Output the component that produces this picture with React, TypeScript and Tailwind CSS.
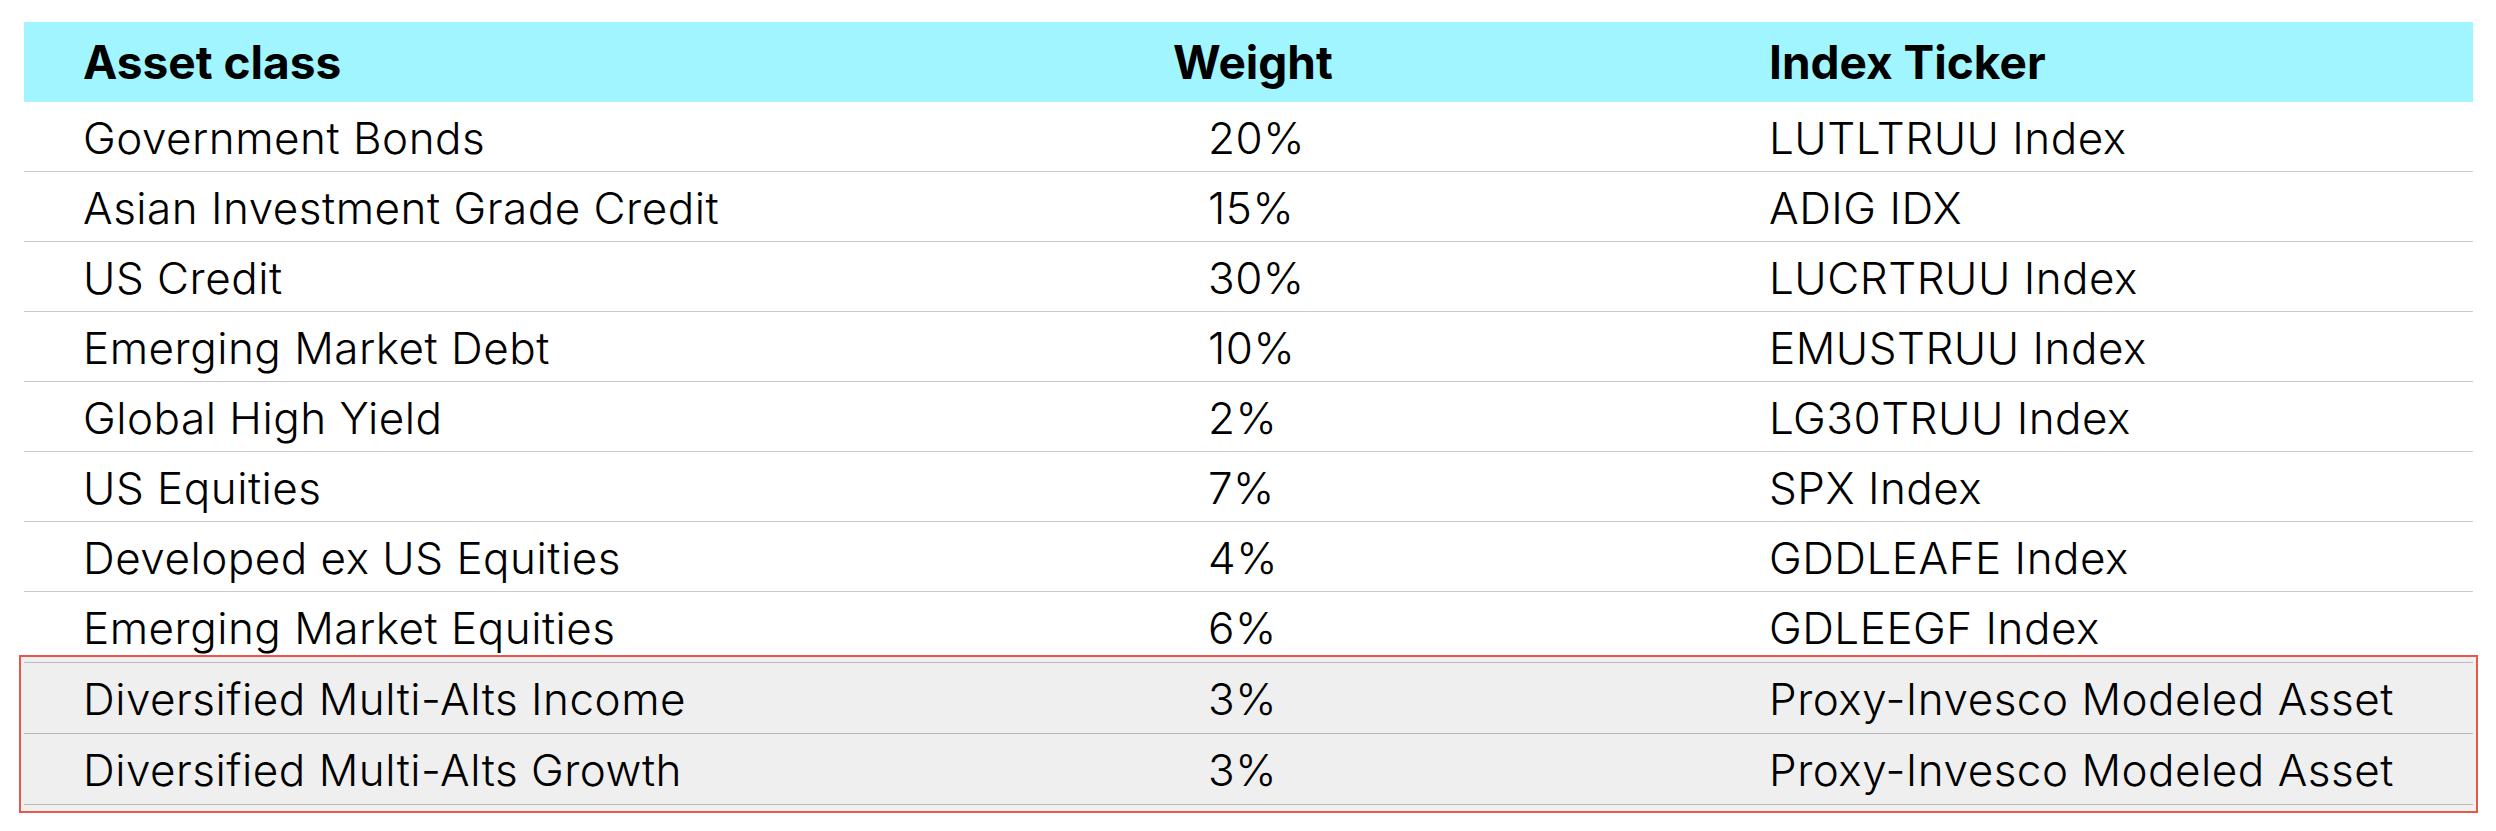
const rows = [
  { asset: 'Government Bonds', weight: '20%', ticker: 'LUTLTRUU Index' },
  { asset: 'Asian Investment Grade Credit', weight: '15%', ticker: 'ADIG IDX' },
  { asset: 'US Credit', weight: '30%', ticker: 'LUCRTRUU Index' },
  { asset: 'Emerging Market Debt', weight: '10%', ticker: 'EMUSTRUU Index' },
  { asset: 'Global High Yield', weight: '2%', ticker: 'LG30TRUU Index' },
  { asset: 'US Equities', weight: '7%', ticker: 'SPX Index' },
  { asset: 'Developed ex US Equities', weight: '4%', ticker: 'GDDLEAFE Index' },
  { asset: 'Emerging Market Equities', weight: '6%', ticker: 'GDLEEGF Index' },
]

const altRows = [
  { asset: 'Diversified Multi-Alts Income', weight: '3%', ticker: 'Proxy-Invesco Modeled Asset' },
  { asset: 'Diversified Multi-Alts Growth', weight: '3%', ticker: 'Proxy-Invesco Modeled Asset' },
]

type Row = { asset: string; weight: string; ticker: string }

function DataRow({ row, last }: { row: Row; last?: boolean }) {
  return (
    <div className={`flex items-center h-[70px] pl-[59px] pt-[2px] ${last ? '' : 'border-b border-[#c9c9c9]'}`}>
      <div className="w-[1125px] shrink-0">{row.asset}</div>
      <div className="w-[561px] shrink-0">{row.weight}</div>
      <div>{row.ticker}</div>
    </div>
  )
}

export default function App() {
  return (
    <div className="min-h-screen bg-white pt-[22px] px-[24px] text-black font-['Inter',sans-serif]">
      <div className="w-[2449px]">
        {/* Header */}
        <div className="flex items-center h-[80px] pl-[59px] bg-[#a0f5fe] text-[46px] font-bold">
          <div className="w-[1090px] shrink-0">Asset class</div>
          <div className="w-[596px] shrink-0">Weight</div>
          <div>Index Ticker</div>
        </div>

        {/* Body */}
        <div className="text-[44px] leading-none font-light tracking-[0.5px]">
          {rows.map((r, i) => (
            <DataRow key={i} row={r} />
          ))}

          {/* Highlighted alternatives */}
          <div className="-mx-[5px] -mt-[7px] px-[3px] pt-[5px] pb-[6px] border-2 border-[#e8574a] bg-[#efefef]">
            <div className="border-t border-[#b9b9b9]">
              {altRows.map((r, i) => (
                <div key={i} className="border-b border-[#b9b9b9]">
                  <DataRow row={r} last />
                </div>
              ))}
            </div>
          </div>
        </div>
      </div>
    </div>
  )
}
